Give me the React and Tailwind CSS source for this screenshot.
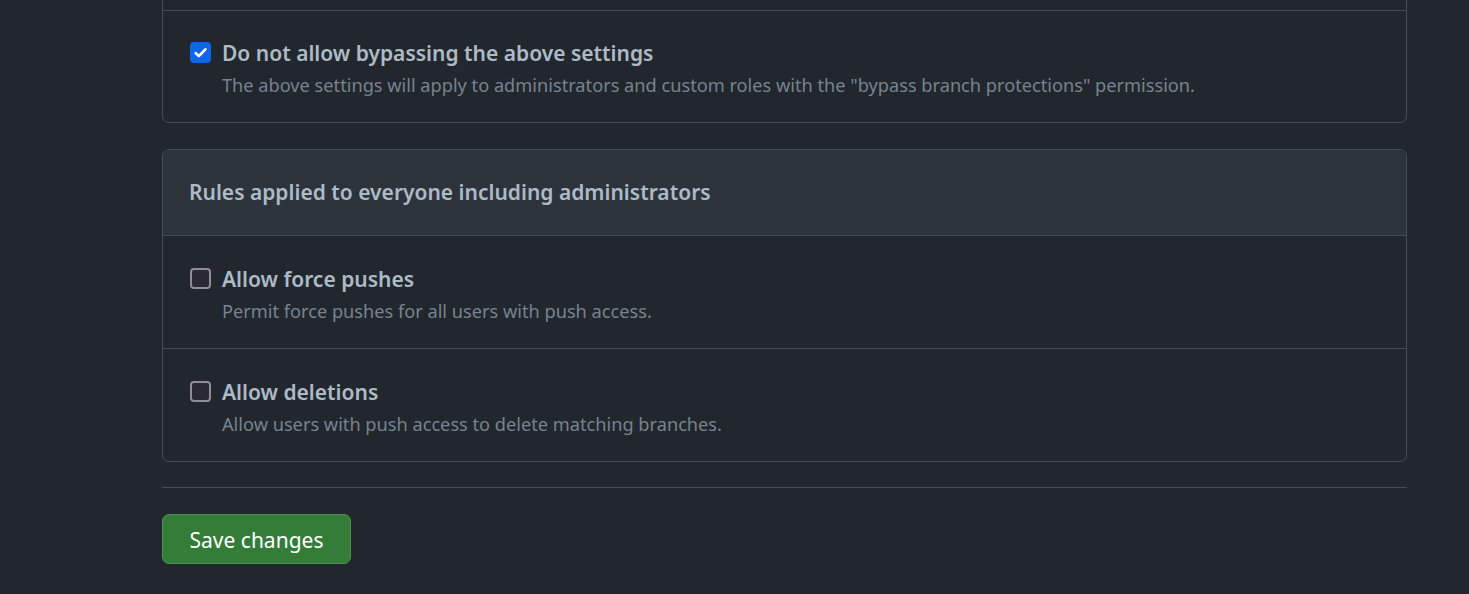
const font = { fontFamily: '"Noto Sans", "Open Sans", sans-serif' };

function Checkbox({ checked }) {
  if (checked) {
    return (
      <span className="mt-[4px] flex h-[21px] w-[21px] shrink-0 items-center justify-center rounded-[4px] bg-[#0e66eb]">
        <svg width="15" height="15" viewBox="0 0 16 16" fill="none">
          <path d="M2.8 8.6l3.4 3.3L13.2 4.6" stroke="#fff" strokeWidth="2.8" strokeLinecap="round" strokeLinejoin="round" />
        </svg>
      </span>
    );
  }
  return <span className="mt-[4px] h-[21px] w-[21px] shrink-0 rounded-[4px] border-[2.5px] border-[#8f8d96] bg-[#2b2a33]" />;
}

function Rule({ checked, title, desc, h, pt, border }) {
  return (
    <div className={`flex gap-[11px] pl-[27px] ${pt} ${h} ${border ? 'border-b border-[#444c56]' : ''}`}>
      <Checkbox checked={checked} />
      <div>
        <div className="text-[21px] font-semibold leading-[30px] text-[#adbac7]">{title}</div>
        <div className="mt-[4px] text-[18.2px] leading-[26px] text-[#768390]">{desc}</div>
      </div>
    </div>
  );
}

export default function App() {
  return (
    <div className="min-h-[594px] overflow-hidden bg-[#22272e]" style={font}>
      <div className="ml-[162px] w-[1245px]">
        {/* first box, top cut off */}
        <div className="-mt-px rounded-b-[7px] border border-[#444c56]">
          <div className="h-[11px] border-b border-[#444c56]" />
          <Rule
            checked
            h="h-[111px]"
            pt="pt-[27px]"
            title="Do not allow bypassing the above settings"
            desc={'The above settings will apply to administrators and custom roles with the "bypass branch protections" permission.'}
          />
        </div>

        {/* second box */}
        <div className="mt-[26px] rounded-[7px] border border-[#444c56]">
          <div className="flex h-[86px] items-center rounded-t-[7px] border-b border-[#444c56] bg-[#2d333b] px-[26px]">
            <h3 className="text-[21px] font-semibold text-[#adbac7]">Rules applied to everyone including administrators</h3>
          </div>
          <Rule border h="h-[113px]" pt="pt-[28px]" title="Allow force pushes" desc="Permit force pushes for all users with push access." />
          <Rule h="h-[112px]" pt="pt-[28px]" title="Allow deletions" desc="Allow users with push access to delete matching branches." />
        </div>

        <div className="mt-[25px] border-t border-[#444c56]" />

        <button className="mt-[26px] h-[50px] w-[189px] rounded-[7px] border border-[#46954a] bg-[#347d39] pt-[3px] text-[21px] font-normal text-white">
          Save changes
        </button>
      </div>
    </div>
  );
}
